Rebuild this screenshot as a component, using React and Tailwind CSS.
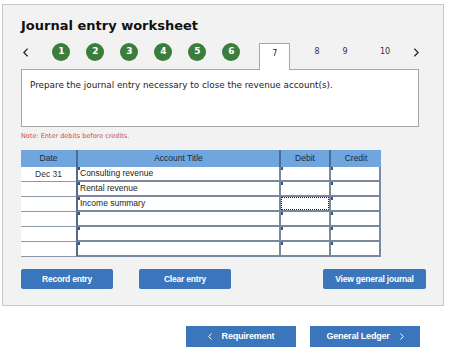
import React from 'react';

const rows = [
    { date: 'Dec 31', account: 'Consulting revenue' },
    { date: '', account: 'Rental revenue' },
    { date: '', account: 'Income summary', focusDebit: true },
    { date: '', account: '' },
    { date: '', account: '' },
    { date: '', account: '' },
];

const Marker = () => (
    <span className="absolute left-0 top-0 w-[2px] h-[3px] bg-[#36598c]" />
);

const InputCell = ({ width, children, focused }) => (
    <div
        className={`relative ${width} h-full bg-white border-r-2 border-b-2 border-[#7a889f] flex items-center`}
    >
        {focused ? (
            <span className="absolute inset-0 border border-dotted border-[#222]" />
        ) : (
            <Marker />
        )}
        <span className="pl-[2px] text-[8.5px] text-[#222] leading-none whitespace-nowrap">{children}</span>
    </div>
);

const StepCircle = ({ n }) => (
    <div className="w-[18px] h-[18px] rounded-full bg-[#3b7d3b] text-white text-[9px] font-bold flex items-center justify-center">
        {n}
    </div>
);

const Chevron = ({ dir = 'left', className = '' }) => (
    <svg viewBox="0 0 6 10" className={className} fill="none" stroke="currentColor" strokeWidth="1.5" strokeLinecap="square">
        {dir === 'left' ? <path d="M5 1 L1 5 L5 9" /> : <path d="M1 1 L5 5 L1 9" />}
    </svg>
);

const Btn = ({ width, children }) => (
    <button className={`${width} h-[20px] rounded-[2px] bg-[#3b75bc] text-white text-[8.5px] font-bold tracking-[-0.2px] flex items-center justify-center`}>
        {children}
    </button>
);

export default function App() {
    return (
        <div className="w-[468px] h-[353px] bg-white" style={{ fontFamily: '"DejaVu Sans", Verdana, sans-serif' }}>
            <div className="ml-[2px] pt-[4px]">
                <div className="w-[442px] bg-[#f2f2f2] border border-[#c8c8c8] pl-[18px] pr-[17px] pt-[13px] pb-[16px]">
                    <h1 className="text-[13px] leading-[16px] font-bold text-[#111]">Journal entry worksheet</h1>

                    {/* step navigation */}
                    <div className="mt-[9px] h-[26px] flex items-start">
                        <div className="w-[33px] h-[18px] flex items-center pl-[2px] text-[#222]">
                            <Chevron dir="left" className="w-[5px] h-[9px]" />
                        </div>
                        <div className="flex gap-[16px]">
                            {[1, 2, 3, 4, 5, 6].map((n) => (
                                <StepCircle key={n} n={n} />
                            ))}
                        </div>
                        <div className="relative z-10 ml-[19px] w-[32px] h-[27px] bg-white border border-b-0 border-[#a8a8a8] text-[8px] text-[#222] flex items-start justify-center pt-[4px]">
                            7
                        </div>
                        <div className="flex items-center h-[18px] text-[8px] text-[#333]">
                            <span className="ml-[17px] w-[20px] text-center">8</span>
                            <span className="ml-[8px] w-[20px] text-center">9</span>
                            <span className="ml-[20px] w-[20px] text-center">10</span>
                            <span className="ml-[11px] w-[20px] flex justify-center text-[#222]">
                                <Chevron dir="right" className="w-[5px] h-[9px]" />
                            </span>
                        </div>
                    </div>

                    {/* prompt */}
                    <div className="w-[398px] h-[58px] bg-white border border-[#a8a8a8] pl-[8px] pt-[9px]">
                        <p className="text-[8.8px] text-[#222] leading-[12px]">
                            Prepare the journal entry necessary to close the revenue account(s).
                        </p>
                    </div>

                    <p className="mt-[4px] text-[6.5px] leading-[10px] text-[#cc4a4a]">Note: Enter debits before credits.</p>

                    {/* journal table */}
                    <div className="mt-[9px] w-[360px]" style={{ fontFamily: '"Liberation Sans", Arial, sans-serif' }}>
                        <div className="flex h-[17px] bg-[#71a5de] text-[8.5px] text-[#1b2a3c]">
                            <div className="w-[57px] flex items-center justify-center border-r-2 border-[#4d6a93]">Date</div>
                            <div className="w-[203px] flex items-center justify-center border-r-2 border-[#4d6a93]">Account Title</div>
                            <div className="w-[50px] flex items-center justify-center border-r-2 border-[#4d6a93]">Debit</div>
                            <div className="w-[50px] flex items-center justify-center">Credit</div>
                        </div>
                        {rows.map((r, i) => (
                            <div key={i} className="flex h-[15px]">
                                <div className="w-[57px] h-full bg-white border-b border-[#8c97a8] border-r-2 border-r-[#56698a] flex items-center justify-center text-[8.5px] text-[#333]">
                                    {r.date}
                                </div>
                                <InputCell width="w-[203px]">{r.account}</InputCell>
                                <InputCell width="w-[50px]" focused={r.focusDebit} />
                                <InputCell width="w-[50px]" />
                            </div>
                        ))}
                    </div>

                    <div className="mt-[12px] flex" style={{ fontFamily: '"Liberation Sans", Arial, sans-serif' }}>
                        <Btn width="w-[92px]">Record entry</Btn>
                        <div className="ml-[26px]">
                            <Btn width="w-[92px]">Clear entry</Btn>
                        </div>
                        <div className="ml-auto">
                            <Btn width="w-[103px]">View general journal</Btn>
                        </div>
                    </div>
                </div>
            </div>

            <div className="mt-[20px] flex gap-[14px] pl-[186px]" style={{ fontFamily: '"Liberation Sans", Arial, sans-serif' }}>
                <button className="w-[110px] h-[21px] bg-[#3b75bc] text-white text-[9px] font-bold tracking-[-0.2px] flex items-center justify-center gap-[10px]">
                    <Chevron dir="left" className="w-[4px] h-[7px]" />
                    <span>Requirement</span>
                </button>
                <button className="w-[110px] h-[21px] bg-[#3b75bc] text-white text-[9px] font-bold tracking-[-0.2px] flex items-center justify-center gap-[10px]">
                    <span>General Ledger</span>
                    <Chevron dir="right" className="w-[4px] h-[7px]" />
                </button>
            </div>
        </div>
    );
}
